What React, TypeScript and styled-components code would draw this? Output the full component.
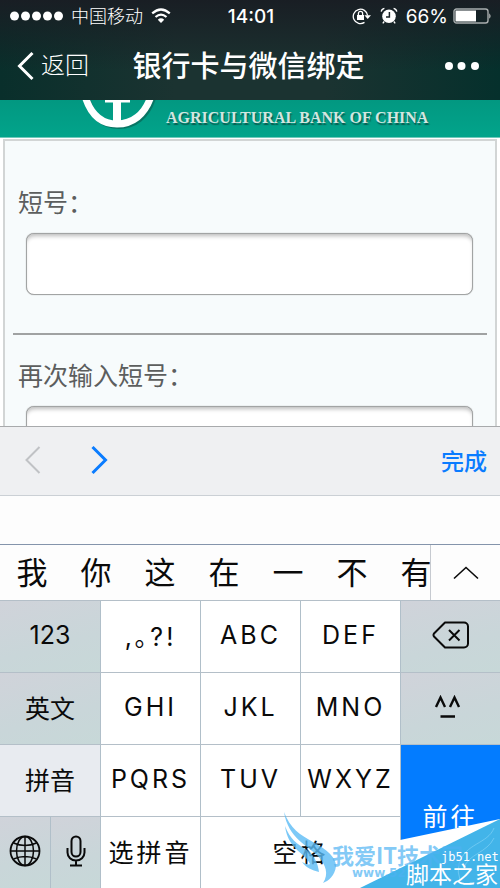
import React from "react";
import styled, { createGlobalStyle } from "styled-components";

const GlobalStyle = createGlobalStyle`
  * { box-sizing: border-box; }
  body { margin: 0; font-family: Inter, "Noto Sans CJK SC", sans-serif; }
  button { font: inherit; border: 0; padding: 0; margin: 0; background: none; color: inherit; cursor: pointer; }
`;

const Screen = styled.div`
  position: relative;
  display: flex;
  flex-direction: column;
  height: 100vh;
  overflow: hidden;
  background: #fdfdfd;
  color: #0a0a0a;
`;

const TopArea = styled.header`
  background: linear-gradient(#191e24, transparent 70%),
    linear-gradient(90deg, #092f2b, #1b3331 35%, #1b3331 65%, #05302c);
  color: #fff;
`;

const StatusBar = styled.div`
  display: grid;
  grid-template-columns: 1fr auto 1fr;
  align-items: center;
  height: 32px;
  padding: 0 8px 0 10px;
  font-size: 19px;
`;

const StatusGroup = styled.div<{ $end?: boolean }>`
  display: flex;
  align-items: center;
  gap: 8px;
  justify-content: ${(p) => (p.$end ? "flex-end" : "flex-start")};
  svg { flex: none; }
`;

const Carrier = styled.span`
  padding-top: 2px;
  font-size: 18px;
  line-height: 24px;
  font-weight: 300;
`;

const Charge = styled.span`
  display: flex;
  align-items: center;
  gap: 5px;
`;

const Clock = styled.time`
  font-weight: 500;
  font-size: 19px;
`;

const NavBar = styled.nav`
  display: grid;
  grid-template-columns: 1fr auto 1fr;
  align-items: center;
  height: 68px;
  padding: 0 20px 0 17px;
`;

const BackButton = styled.button`
  display: flex;
  align-items: center;
  gap: 7px;
  font-size: 24px;
  font-weight: 300;
  line-height: 32px;
`;

const Title = styled.h1`
  margin: 0;
  padding-top: 2px;
  font-size: 29px;
  line-height: 40px;
  font-weight: 500;
`;

const MoreButton = styled.button`
  display: flex;
  justify-self: end;
`;

const WebView = styled.main`
  flex: 1 1 0;
  min-height: 0;
  overflow: hidden;
  background: #fff;
`;

const Banner = styled.div`
  display: flex;
  height: 38px;
  padding-left: 80px;
  gap: 9px;
  background: linear-gradient(#029881, #02a48b);
  border-bottom: 1px solid #6fc9bb;
`;

const BankName = styled.span`
  padding-top: 8px;
  font: bold 16px/20px "Liberation Serif", serif;
  color: #d2e6e0;
  text-shadow: 1px 2px 1px #0b5c50;
  white-space: nowrap;
`;

const Form = styled.form`
  margin: 1px 3px 0;
  padding: 44px 8px 0;
  border: 2px solid #d2d5d5;
  background: #f7fbfc;
  height: 100%;
`;

const Field = styled.div`
  display: flex;
  flex-direction: column;
  padding: 0 14px 0 5px;
`;

const Label = styled.label`
  font-size: 25px;
  line-height: 36px;
  font-weight: 400;
  color: #5c5e5e;
`;

const TextInput = styled.input`
  height: 62px;
  margin: 12px 0 0 8px;
  padding: 0 12px;
  border: 1px solid #a2a4a4;
  border-radius: 8px;
  background: #fff;
  box-shadow: inset 0 4px 4px -2px #bbb, 0 0 1px #999;
  font-size: 25px;
  outline: none;
`;

const Divider = styled.hr`
  height: 2px;
  margin: 38px 0 23px;
  border: 0;
  background: #a0a2a2;
`;

const Accessory = styled.div`
  display: flex;
  align-items: center;
  flex: none;
  height: 70px;
  padding: 0 13px 2px 24px;
  gap: 50px;
  background: #eff0f2;
  border-top: 1px solid #a8aaac;
  border-bottom: 1px solid #cbd0d5;
`;

const StepButton = styled.button`
  display: flex;
`;

const DoneButton = styled.button`
  margin-left: auto;
  padding-top: 4px;
  font-size: 23px;
  line-height: 32px;
  font-weight: 500;
  color: #0a7cff;
`;

const Composition = styled.div`
  flex: none;
  height: 48px;
`;

const Candidates = styled.div`
  display: flex;
  flex: none;
  height: 56px;
  border-top: 1px solid #8494ab;
`;

const CandidateList = styled.div`
  display: flex;
  flex: 1 1 0;
  min-width: 0;
  overflow: hidden;
  border-right: 1px solid #c6cad0;
`;

const Candidate = styled.button`
  flex: none;
  width: 64px;
  font-size: 31px;
  line-height: 52px;
`;

const ExpandButton = styled.button`
  display: flex;
  align-items: center;
  justify-content: center;
  width: 69px;
`;

const Keypad = styled.div`
  display: grid;
  flex: none;
  grid-template-columns: repeat(10, 1fr);
  grid-template-rows: repeat(4, 72px);
`;

type Tone = "letter" | "side" | "selected" | "go";
const tones: Record<Tone, string> = {
  letter: "#fff",
  side: "linear-gradient(165deg, #d0d3da, #c9d6d9 60%, #c7d8d8)",
  selected: "#e8ebf0",
  go: "#037cff",
};

const Key = styled.button<{ $tone?: Tone; $span?: number; $rows?: number; $spaced?: boolean; $first?: boolean }>`
  display: flex;
  align-items: center;
  justify-content: center;
  padding-bottom: 4px;
  grid-column: span ${(p) => p.$span ?? 2};
  grid-row: span ${(p) => p.$rows ?? 1};
  background: ${(p) => tones[p.$tone ?? "letter"]};
  color: ${(p) => (p.$tone === "go" ? "#fff" : "#0a0a0a")};
  border-top: 1px solid #b4bfc8;
  border-left: ${(p) => (p.$first ? "0" : "1px solid #b0bfc9")};
  font-size: 25px;
  letter-spacing: ${(p) => (p.$spaced ? "3px" : "0")};
  white-space: nowrap;
`;

const Watermark = styled.div`
  position: absolute;
  right: 0;
  bottom: 0;
  width: 220px;
  height: 80px;
  pointer-events: none;
  svg { display: block; }
`;

const Wifi = () => (
  <svg width="20" height="16" viewBox="0 0 20 16" fill="none" stroke="#fff" strokeWidth="2.2">
    <path d="M1.2 5.4Q10-2.400 18.800 5.400M4.500 9Q10 4.200 15.500 9" />
    <path d="M10 15 6.800 11.700Q10 9 13.200 11.700Z" fill="#fff" stroke="none" />
  </svg>
);

const RotationLock = () => (
  <svg width="20" height="18" viewBox="0 0 20 18" fill="none" stroke="#fff" strokeWidth="1.3">
    <path d="M12.5 15.4A7.2 7.2 0 1 1 15.6 8.5" />
    <path d="M12.4 8.2H19L15.7 12Z" fill="#fff" stroke="none" />
    <rect x="5" y="8" width="7" height="5" fill="#fff" stroke="none" />
    <path d="M6.4 8V6.5a2.1 2.1 0 0 1 4.2 0V8" />
  </svg>
);

const Alarm = () => (
  <svg width="18" height="18" viewBox="0 0 18 18" fill="none">
    <circle cx="9" cy="9.3" r="6.800" fill="#fff" />
    <path d="M9.4 5v5H6" stroke="#1a2327" strokeWidth="1.5" />
    <path d="M1.2 4.6A4 4 0 0 1 4.4 1.4M13.6 1.4a4 4 0 0 1 3.2 3.2M4.2 14.5 2.8 16.4M13.8 14.5l1.4 1.9" stroke="#fff" strokeWidth="1.3" />
  </svg>
);

const Battery = () => (
  <svg width="39" height="16" viewBox="0 0 39 16">
    <rect x="1" y="1" width="34" height="14" rx="2.5" fill="none" stroke="#a8adae" strokeWidth="1.4" />
    <rect x="2.5" y="2.5" width="20.5" height="11" fill="#fff" />
    <path d="M36.4 5.2q2.2 2.8 0 5.6Z" fill="#ddd" />
  </svg>
);

const BankLogo = () => (
  <svg width="77" height="37" viewBox="0 0 77 37" fill="none">
    <path d="M7-2C13 19 24 26 39 26S67 17 73-2" stroke="#087564" strokeWidth="6" />
    <path d="M5-4C11 16 22 24 37 24S65 15 71-4" stroke="#fff" strokeWidth="7" />
    <path d="M25 0H50V2.500H41V22H33V2.500H25Z" fill="#fff" />
  </svg>
);

const Chevron = ({ dir, color, width = 2 }: { dir: "left" | "right"; color: string; width?: number }) => (
  <svg width="17" height="30" viewBox="0 0 17 30" fill="none" stroke={color} strokeWidth={width}>
    <path d={dir === "left" ? "M15.500 2 2.500 15l13 13" : "M1.500 2l13 13-13 13"} />
  </svg>
);

const Backspace = () => (
  <svg width="38" height="28" viewBox="0 0 38 28" fill="none" stroke="#0a0a0a" strokeWidth="2">
    <path d="M13 1.500H32a4 4 0 0 1 4 4V22.500a4 4 0 0 1-4 4H13L2 15.500Q1 14 2 12.500Z" strokeLinejoin="round" />
    <path d="m17 9 10.500 10.500M27.500 9 17 19.500" />
  </svg>
);

const Face = () => (
  <svg width="34" height="24" viewBox="0 0 34 24" fill="none" stroke="#0a0a0a" strokeWidth="2.400">
    <path d="M2 12 6.500 2.500 11 12M16 12 20.500 2.500 25 12M6.500 21.500h14.500" />
  </svg>
);

const Globe = () => (
  <svg width="32" height="32" viewBox="0 0 32 32" fill="none" stroke="#0a0a0a" strokeWidth="1.500">
    <circle cx="16" cy="16" r="14.500" strokeWidth="1.800" />
    <ellipse cx="16" cy="16" rx="8.500" ry="14.500" />
    <path d="M16 1.500v29M1.500 16h29M4.500 8Q16 13 27.500 8M4.500 24Q16 19 27.500 24" />
  </svg>
);

const Mic = () => (
  <svg width="20" height="32" viewBox="0 0 20 32" fill="none" stroke="#0a0a0a" strokeWidth="2">
    <rect x="5.500" y="1.500" width="9" height="20" rx="4.500" />
    <path d="M1.500 13v4.500a8.500 8 0 0 0 17 0V13M10 25.500v5M4 30.500h12" />
  </svg>
);

const keys: { label: React.ReactNode; name?: string; tone?: Tone; span?: number; rows?: number; spaced?: boolean; first?: boolean }[] = [
  { label: "123", tone: "side", first: true },
  { label: ",｡?!", spaced: true },
  { label: "ABC", spaced: true },
  { label: "DEF", spaced: true },
  { label: <Backspace />, name: "删除", tone: "side" },
  { label: "英文", tone: "side", first: true },
  { label: "GHI", spaced: true },
  { label: "JKL", spaced: true },
  { label: "MNO", spaced: true },
  { label: <Face />, name: "表情", tone: "side" },
  { label: "拼音", tone: "selected", first: true },
  { label: "PQRS", spaced: true },
  { label: "TUV", spaced: true },
  { label: "WXYZ", spaced: true },
  { label: "前往", tone: "go", rows: 2, spaced: true },
  { label: <Globe />, name: "切换键盘", tone: "side", span: 1, first: true },
  { label: <Mic />, name: "听写", tone: "side", span: 1 },
  { label: "选拼音", spaced: true },
  { label: "空格", span: 4, spaced: true },
];

export default function App() {
  return (
    <Screen lang="zh-CN">
      <GlobalStyle />
      <TopArea>
        <StatusBar>
          <StatusGroup>
            <svg width="53" height="10" viewBox="0 0 53 10" fill="#fff">
              {[4.5, 15.5, 26.5, 37.5, 48.5].map((x) => <circle key={x} cx={x} cy="5" r="4.500" />)}
            </svg>
            <Carrier>中国移动</Carrier>
            <Wifi />
          </StatusGroup>
          <Clock>14:01</Clock>
          <StatusGroup $end>
            <RotationLock />
            <Alarm />
            <Charge>66%<Battery /></Charge>
          </StatusGroup>
        </StatusBar>
        <NavBar>
          <BackButton type="button"><Chevron dir="left" color="#fff" width={3} />返回</BackButton>
          <Title>银行卡与微信绑定</Title>
          <MoreButton type="button" aria-label="更多">
            <svg width="36" height="10" viewBox="0 0 36 10" fill="#fff">
              <circle cx="5" cy="5" r="4" /><circle cx="17.500" cy="5" r="4" /><circle cx="31" cy="5" r="4" />
            </svg>
          </MoreButton>
        </NavBar>
      </TopArea>
      <WebView>
        <Banner>
          <BankLogo />
          <BankName>AGRICULTURAL BANK OF CHINA</BankName>
        </Banner>
        <Form>
          <Field>
            <Label htmlFor="short">短号：</Label>
            <TextInput id="short" type="text" />
          </Field>
          <Divider />
          <Field>
            <Label htmlFor="short-again">再次输入短号：</Label>
            <TextInput id="short-again" type="text" />
          </Field>
        </Form>
      </WebView>
      <Accessory>
        <StepButton type="button" aria-label="上一项"><Chevron dir="left" color="#c0c2c5" /></StepButton>
        <StepButton type="button" aria-label="下一项"><Chevron dir="right" color="#0a7cff" width={3} /></StepButton>
        <DoneButton type="button">完成</DoneButton>
      </Accessory>
      <Composition />
      <Candidates>
        <CandidateList>
          {[..."我你这在一不有"].map((c) => <Candidate key={c} type="button">{c}</Candidate>)}
        </CandidateList>
        <ExpandButton type="button" aria-label="展开">
          <svg width="26" height="14" viewBox="0 0 26 14" fill="none" stroke="#0a0a0a" strokeWidth="1.600"><path d="M1 12.500 13 1.500l12 11" /></svg>
        </ExpandButton>
      </Candidates>
      <Keypad>
        {keys.map((k, i) => (
          <Key key={i} type="button" aria-label={k.name} $tone={k.tone} $span={k.span} $rows={k.rows} $spaced={k.spaced} $first={k.first}>
            {k.label}
          </Key>
        ))}
      </Keypad>
      <Watermark>
        <svg width="220" height="80" viewBox="0 0 220 80">
          <path d="M220 11 120 32 80 80H220Z" fill="#fff" />
          <path d="M220 11 80 80H220Z" fill="#42b4e9" />
          <g fill="#5bbcf5" fillOpacity="0.800">
            <path d="M4 4C10 20 20 27 33 34 48 42 56 50 56 58 55 68 48 73 43 75 49 66 46 57 38 48 28 38 8 30 4 4Z" />
            <path d="M5 18C10 31 17 36 27 42 35 48 38 56 39 64 32 62 26 60 22 54 26 56 29 57 30 56 26 45 8 42 5 18Z" />
          </g>
          <g fill="none" stroke="#7fd0f5" strokeOpacity="0.700">
            <path d="M214 20C208 36 185 35 179 56q-2 8 1 16M214 30C207 45 188 46 184 60" />
          </g>
          <text x="52" y="56" fontSize="22" fontWeight="700" fill="#4db2f2" fillOpacity="0.700" fontFamily='"Noto Sans CJK SC", sans-serif'>我爱IT技术网</text>
          <text x="72" y="69" fontSize="12" fontWeight="700" fill="#4db2f2" fillOpacity="0.700" fontFamily='"DejaVu Sans", sans-serif'>www.52ij.com</text>
          <text x="161" y="53" fontSize="12" fill="#fff" fontFamily='"DejaVu Sans Mono", monospace'>jb51.net</text>
          <text x="126" y="75" fontSize="23" fontWeight="400" fill="#fff" fontFamily='"Noto Sans CJK SC", sans-serif'>脚本之家</text>
        </svg>
      </Watermark>
    </Screen>
  );
}
